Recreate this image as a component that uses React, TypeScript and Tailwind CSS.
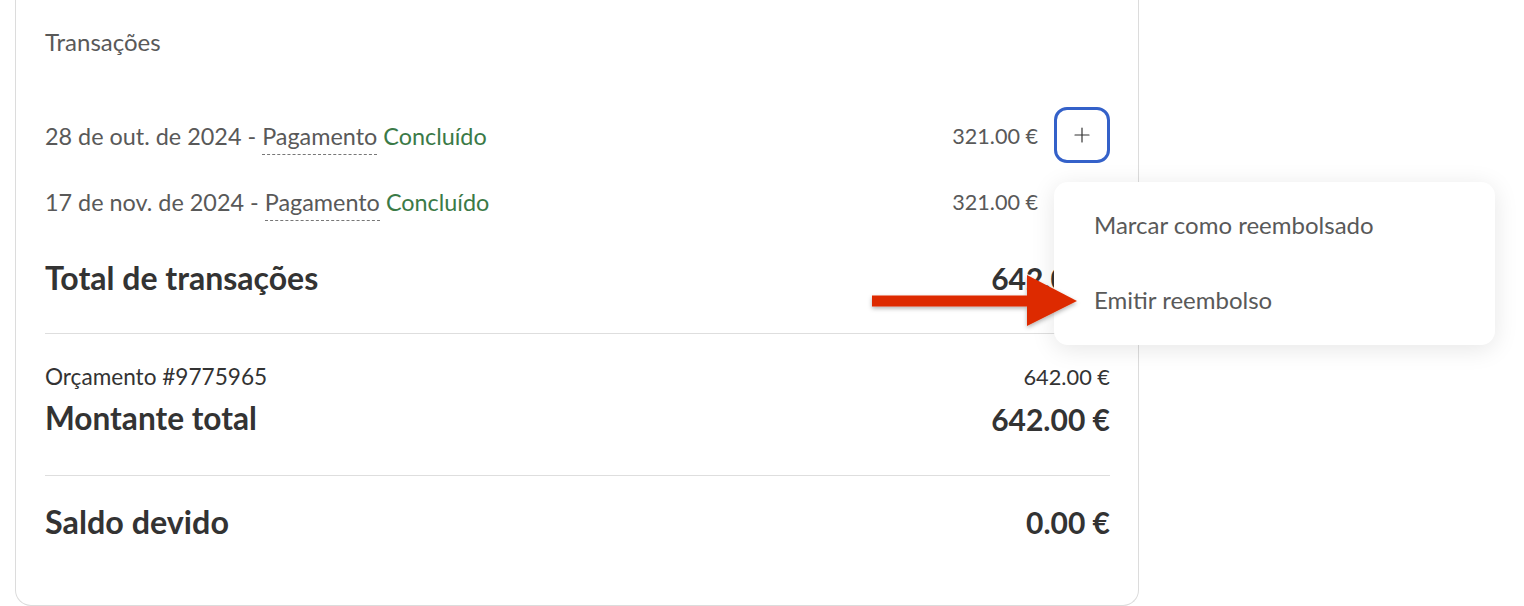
import { Plus } from 'lucide-react';

const font = { fontFamily: 'Lato, "Noto Sans", sans-serif' };

function TxRow({ date, amount, withButton }: { date: string; amount: string; withButton?: boolean }) {
  return (
    <div className={`flex items-center justify-between ${withButton ? 'h-[56px]' : 'h-[40px]'}`}>
      <div className="pt-[3px] text-[23.4px] text-[#595959]">
        {date} -{' '}
        <span className="border-b border-dashed border-[#777] pb-[4px]">Pagamento</span>{' '}
        <span className="text-[#3b7a47]">Concluído</span>
      </div>
      <div className="flex items-center gap-4">
        <span className="pt-[2px] text-[21.6px] text-[#595959]">{amount}</span>
        {withButton ? (
          <button className="w-[56px] h-[56px] rounded-[13px] border-[3px] border-[#3461c9] flex items-center justify-center text-[#333]">
            <Plus className="w-[24px] h-[24px]" strokeWidth={1.2} />
          </button>
        ) : (
          <span className="w-[56px]" />
        )}
      </div>
    </div>
  );
}

export default function App() {
  return (
    <div className="relative w-[1524px] h-[606px] bg-white overflow-hidden" style={font}>
      <div className="ml-[15px] w-[1124px] h-[606px] border-x border-b border-[#dcdcdc] rounded-b-[16px] pl-[29px] pr-[28px]">
        <div className="h-[84px] flex items-center text-[24px] text-[#595959]">Transações</div>

        <div className="mt-[23px]">
          <TxRow date="28 de out. de 2024" amount="321.00 €" withButton />
        </div>
        <div className="mt-[18px]">
          <TxRow date="17 de nov. de 2024" amount="321.00 €" />
        </div>

        <div className="mt-[37px] h-[40px] flex items-center justify-between font-bold text-[#333]">
          <span className="text-[32px]">Total de transações</span>
          <span className="text-[30px]">642.00 €</span>
        </div>

        <div className="mt-[35px] h-px bg-[#dedede]" />

        <div className="mt-[28px] h-[30px] flex items-center justify-between text-[#333]">
          <span className="text-[22.6px]">Orçamento #9775965</span>
          <span className="text-[21.8px]">642.00 €</span>
        </div>
        <div className="mt-[7px] h-[40px] flex items-center justify-between font-bold text-[#333]">
          <span className="text-[31.6px]">Montante total</span>
          <span className="text-[30px]">642.00 €</span>
        </div>

        <div className="mt-[36px] h-px bg-[#dedede]" />

        <div className="mt-[26px] h-[40px] flex items-center justify-between font-bold text-[#333]">
          <span className="text-[32.3px]">Saldo devido</span>
          <span className="text-[30px]">0.00 €</span>
        </div>
      </div>

      {/* dropdown menu */}
      <div className="absolute left-[1054px] top-[182px] w-[441px] h-[163px] bg-white rounded-[14px] shadow-[0_4px_24px_rgba(0,0,0,0.10)] flex flex-col px-10 pt-[23px] text-[24px] text-[#595959]">
        <div className="h-[40px] flex items-center">Marcar como reembolsado</div>
        <div className="mt-[35px] h-[40px] flex items-center">Emitir reembolso</div>
      </div>

      {/* red arrow */}
      <svg className="absolute left-[866px] top-[270px]" width="220" height="64" viewBox="0 0 220 64">
        <defs>
          <filter id="sh" x="-10%" y="-20%" width="130%" height="150%">
            <feDropShadow dx="0" dy="2" stdDeviation="2" floodColor="#000" floodOpacity="0.3" />
          </filter>
        </defs>
        <g filter="url(#sh)">
          <rect x="6" y="25.5" width="158" height="11" fill="#dd2c06" />
          <polygon points="161,5 211,31 161,56" fill="#dd2c06" />
        </g>
      </svg>
    </div>
  );
}
